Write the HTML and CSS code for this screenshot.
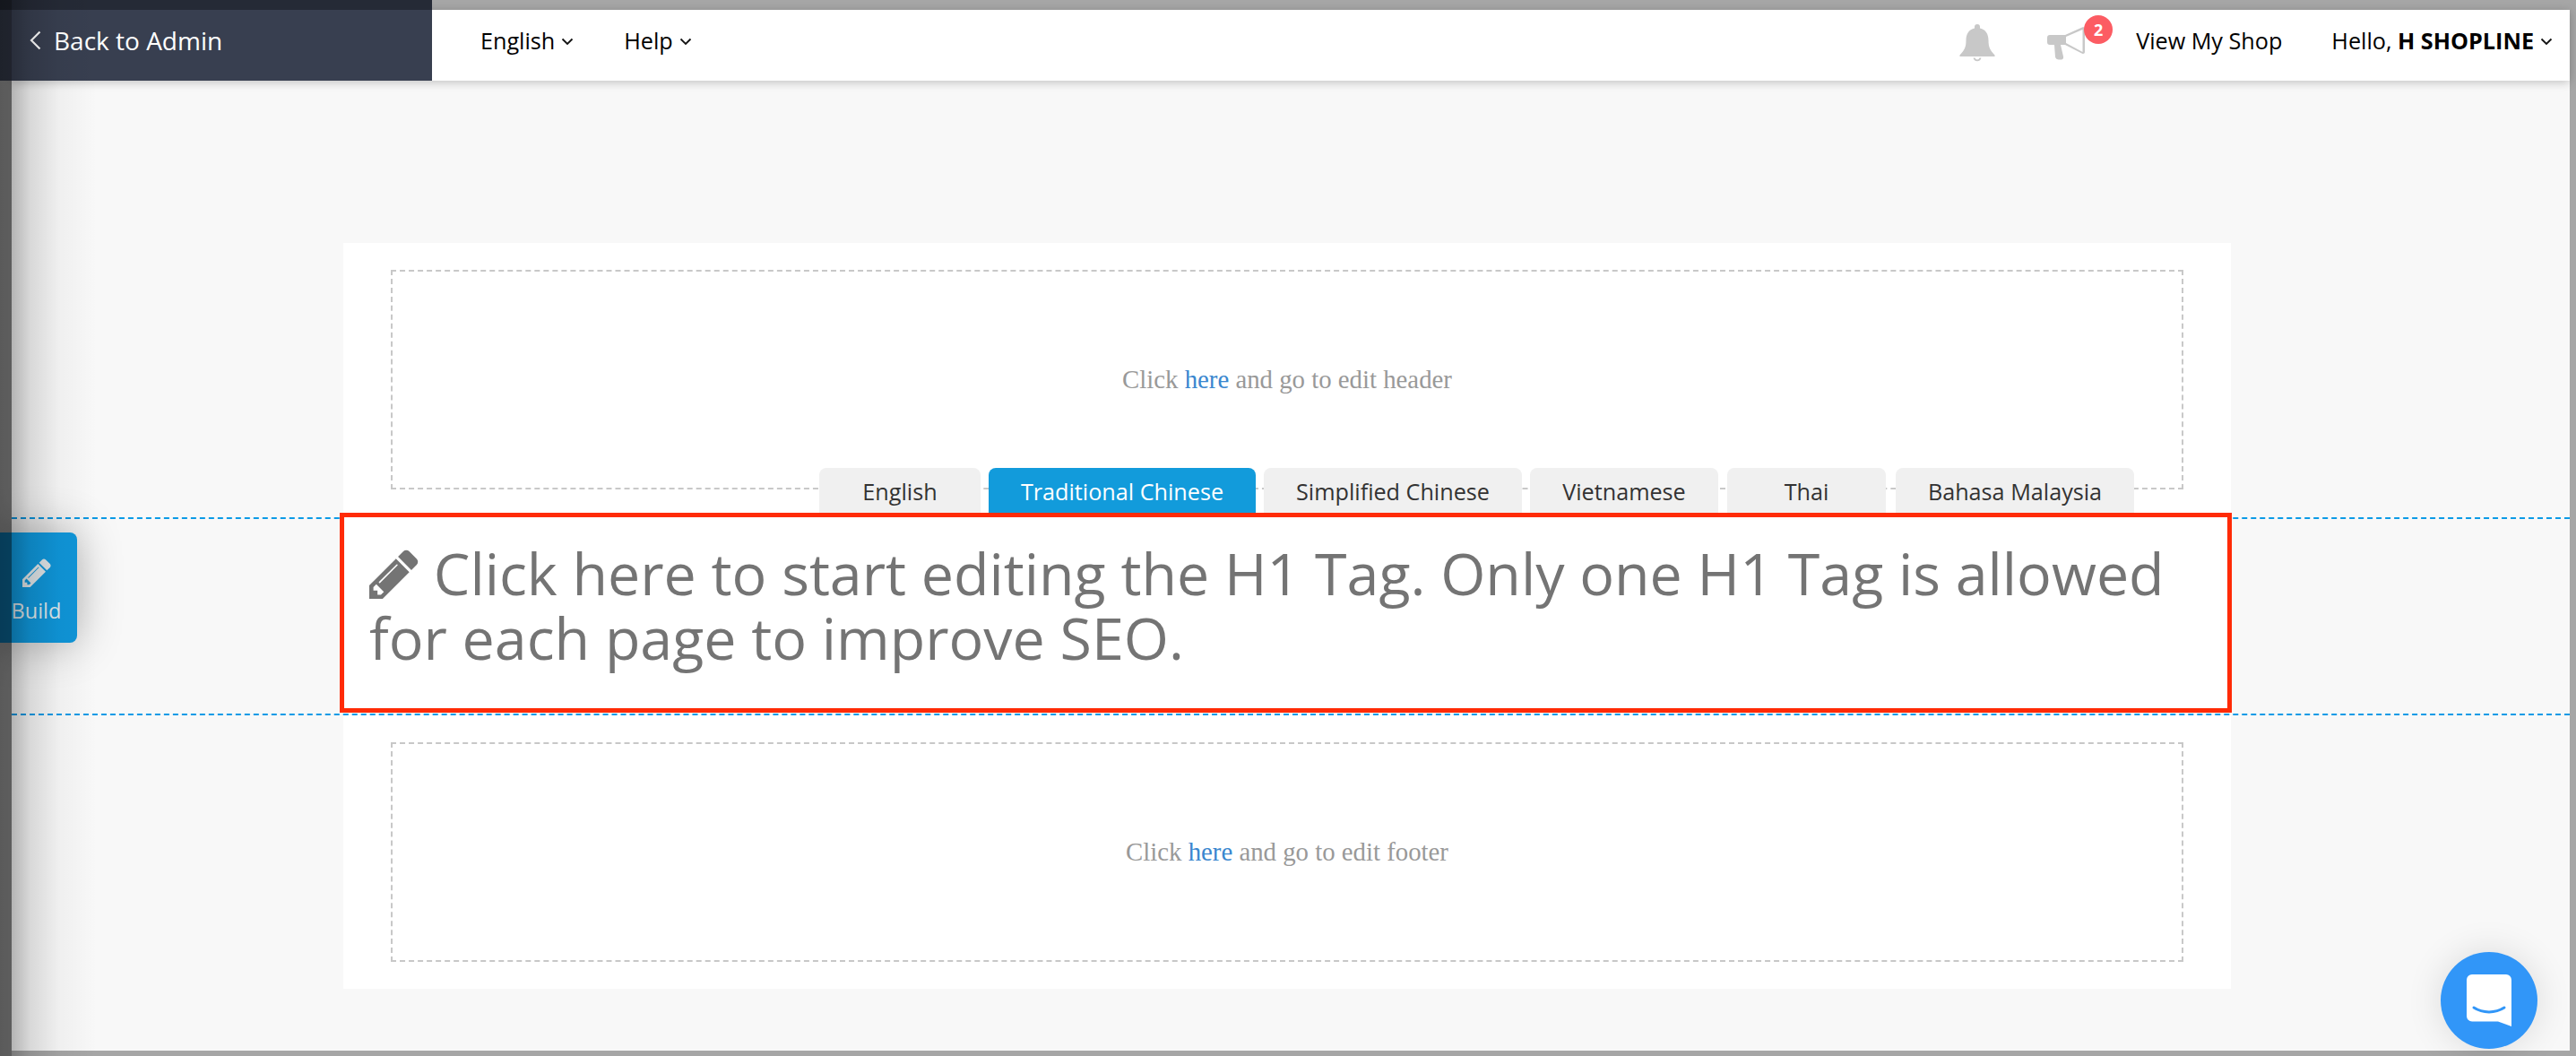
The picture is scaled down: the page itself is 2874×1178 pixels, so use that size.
FILE: index.html
```html
<!DOCTYPE html>
<html lang="en">
<head>
<meta charset="utf-8">
<title>Page Builder</title>
<link rel="stylesheet" href="styles.css">
</head>
<body>
<div class="frame">
  <header class="topbar">
    <a class="back">
      <svg class="back-icon" viewBox="0 0 13 22"><path d="M11.500 1.500 2 11l9.500 9.500"/></svg>
      <span>Back to Admin</span>
    </a>
    <nav class="menu">
      <span class="menu-item">English<svg class="chev" viewBox="0 0 14 9"><path d="M1.500 1.500 7 7l5.500-5.500"/></svg></span>
      <span class="menu-item">Help<svg class="chev" viewBox="0 0 14 9"><path d="M1.500 1.500 7 7l5.500-5.500"/></svg></span>
    </nav>
    <div class="user">
      <svg class="bell" viewBox="0 0 40 44"><path d="M20 1a3 3 0 0 1 3 3v1.500C29.500 7 32.500 12 32.500 19c0 8 2 11 7 16.500V37H.5v-1.500C5.500 30 7.500 27 7.500 19 7.500 12 10.500 7 17 5.500V4a3 3 0 0 1 3-3Z"/><path d="M15.500 38.500a4.600 4.600 0 0 0 9 0h-2a2.600 2.600 0 0 1-5 0Z"/></svg>
      <span class="promo">
        <svg class="horn" viewBox="0 0 44 38"><path d="M3 10h17L39 1.500c1.500-.7 3-.2 3 1.500v26c0 1.700-1.500 2.500-3 1.700L20 21h-5l3 13c.5 2.500-1 3.500-3 3.500h-2c-2 0-3.500-1-4-3L8 21H3a3 3 0 0 1-3-3v-5a3 3 0 0 1 3-3Z"/><path class="horn-cut" d="M21 12 39.500 4v25L21 19Z"/></svg>
        <b class="badge">2</b>
      </span>
      <span class="shop">View My Shop</span>
      <span class="hello">Hello, <b>H SHOPLINE</b><svg class="chev" viewBox="0 0 14 9"><path d="M1.500 1.500 7 7l5.500-5.500"/></svg></span>
    </div>
  </header>

  <main class="canvas">
    <div class="slot-wrap">
      <div class="slot">Click&nbsp;<a>here</a>&nbsp;and go to edit header</div>
    </div>
    <section class="section">
      <div class="tabs">
        <span class="tab tab-en">English</span>
        <span class="tab tab-tc active">Traditional Chinese</span>
        <span class="tab tab-sc">Simplified Chinese</span>
        <span class="tab tab-vi">Vietnamese</span>
        <span class="tab tab-th">Thai</span>
        <span class="tab tab-ms">Bahasa Malaysia</span>
      </div>
      <h1 class="h1-box">
        <svg class="pencil" viewBox="128 128 1536 1536"><path d="M491 1536l91-91-235-235-91 91v107h128v128h107zm523-928q0-22-22-22-10 0-17 7l-542 542q-7 7-7 17 0 22 22 22 10 0 17-7l542-542q7-7 7-17zm-54-192l416 416-832 832h-416v-416zm683 96q0 53-37 90l-166 166-416-416 166-165q36-38 90-38 53 0 91 38l235 234q37 39 37 91z"/></svg>
        Click here to start editing the H1 Tag. Only one H1 Tag is allowed for each page to improve SEO.
      </h1>
    </section>
    <div class="slot-wrap slot-wrap-bottom">
      <div class="slot">Click&nbsp;<a>here</a>&nbsp;and go to edit footer</div>
    </div>
  </main>
</div>

<div class="edge-shadow"></div>
<div class="edge-band"></div>

<button class="build">
  <svg class="build-icon" viewBox="128 128 1536 1536"><path d="M491 1536l91-91-235-235-91 91v107h128v128h107zm523-928q0-22-22-22-10 0-17 7l-542 542q-7 7-7 17 0 22 22 22 10 0 17-7l542-542q7-7 7-17zm-54-192l416 416-832 832h-416v-416zm683 96q0 53-37 90l-166 166-416-416 166-165q36-38 90-38 53 0 91 38l235 234q37 39 37 91z"/></svg>
  <span>Build</span>
</button>

<button class="chat">
  <svg viewBox="0 0 50 58" class="chat-icon"><path d="M6 0h38a6 6 0 0 1 6 6v52l-15-5.500H6a6 6 0 0 1-6-6V6a6 6 0 0 1 6-6Z"/><path class="smile" d="M8 37c10 6.500 24 6.500 34 0"/></svg>
</button>
</body>
</html>
```

FILE: styles.css
```css
* { box-sizing: border-box; }
html, body { margin: 0; height: 1178px; overflow: hidden; }
body {
  position: relative;
  background: #a6a6a6;
  padding: 11px 7px 6px 13px;
  font-family: "Open Sans", sans-serif;
}
.frame {
  height: 100%;
  background: #f8f8f8;
  display: flex;
  flex-direction: column;
}
.topbar {
  height: 79px;
  flex: none;
  background: #fff;
  display: flex;
  align-items: center;
  padding-bottom: 11px;
  box-shadow: 0 2px 10px rgba(0,0,0,.22);
  position: relative;
  z-index: 1;
  font-size: 25.2px;
  color: #000;
}
.back {
  flex: none;
  width: 482px;
  height: 90px;
  margin: 0 0 0 -13px;
  border-top: 11px solid #252a36;
  background: #383f50;
  color: #fff;
  display: flex;
  align-items: center;
  gap: 14px;
  padding: 0 0 11px 33px;
  font-size: 28px;
}
.back-icon { width: 13px; height: 22px; fill: none; stroke: #fff; stroke-width: 2.2; }
.menu { display: flex; gap: 56px; margin-left: 54px; }
.menu-item, .hello { display: flex; align-items: center; white-space: pre; }
.chev { width: 14px; height: 9px; margin: 2px 0 0 7px; fill: none; stroke: #111; stroke-width: 1.8; }
.user { margin-left: auto; display: flex; align-items: center; padding-right: 19px; }
.bell { width: 40px; height: 44px; fill: #c8c8c8; margin: 6px 58px 0 0; }
.promo { position: relative; display: block; width: 44px; height: 38px; margin: 6px 55px 0 0; }
.horn { width: 44px; height: 38px; fill: #c8c8c8; display: block; }
.horn-cut { fill: #fff; }
.badge {
  position: absolute;
  left: 41px;
  top: -12px;
  width: 32px;
  height: 32px;
  border-radius: 50%;
  background: #fc5c63;
  color: #fff;
  font-size: 18px;
  line-height: 32px;
  text-align: center;
}
.shop { margin-right: 55px; }
.hello b { font-weight: 700; }

.canvas {
  flex: 1;
  display: flex;
  flex-direction: column;
  padding-top: 181px;
}
.slot-wrap {
  width: 2106px;
  margin-left: 370px;
  height: 307px;
  padding: 30px 53px 0;
  background: #fff;
}
.slot-wrap-bottom { height: 305px; padding-top: 30px; }
.slot {
  height: 245px;
  border: 2px dashed #c8c8c8;
  display: flex;
  align-items: center;
  justify-content: center;
  font-family: "Liberation Serif", serif;
  font-size: 28.8px;
  color: #999;
}
.slot a { color: #3a87cf; }
.section {
  position: relative;
  height: 221px;
  margin-top: -1px;
  border-top: 2px dashed #0b9ae6;
  border-bottom: 2px dashed #0b9ae6;
}
.tabs {
  position: absolute;
  top: -57px;
  left: 901px;
  display: flex;
  gap: 9px;
}
.tab {
  height: 50px;
  border-radius: 8px 8px 0 0;
  background: #f0f0f0;
  color: #333;
  font-size: 25.2px;
  line-height: 52px;
  text-align: center;
}
.tab-en { width: 180px; }
.tab-tc { width: 298px; }
.tab-sc { width: 288px; }
.tab-vi { width: 210px; }
.tab-th { width: 177px; margin-left: 1px; }
.tab-ms { width: 266px; margin-left: 2px; }
.tab.active { background: #129bdb; color: #fff; }
.h1-box {
  position: relative;
  margin: -7px 0 0 366px;
  width: 2111px;
  height: 223px;
  border: 5px solid #ff2b06;
  background: #fff;
  padding: 26px 20px 0 28px;
  font-size: 64.5px;
  line-height: 72px;
  font-weight: 400;
  color: #747474;
}
.pencil { width: 55px; height: 55px; fill: #747474; vertical-align: -4px; }

.edge-shadow {
  position: absolute;
  left: 0; top: 0; bottom: 0;
  width: 120px;
  background: linear-gradient(90deg, rgba(0,0,0,.3) 0%, rgba(0,0,0,.27) 11%, rgba(0,0,0,.13) 28%, rgba(0,0,0,.035) 55%, rgba(0,0,0,0) 90%);
  z-index: 5;
  pointer-events: none;
}
.edge-band {
  position: absolute;
  left: 0; top: 0; bottom: 0;
  width: 13px;
  background: rgba(0,0,0,.22);
  z-index: 5;
  pointer-events: none;
}
.build {
  position: absolute;
  left: 0;
  top: 594px;
  width: 86px;
  height: 123px;
  border: 0;
  border-radius: 0 8px 8px 0;
  background: #0f95d8;
  color: #dfe6ea;
  font: 23.5px/32px "Open Sans", sans-serif;
  padding: 29px 5px 0 0;
  display: flex;
  flex-direction: column;
  align-items: center;
  justify-content: flex-start;
  gap: 10px;
  box-shadow: 0 0 50px rgba(0,0,0,.3), inset 13px 0 0 rgba(0,0,0,.25);
  z-index: 3;
}
.build-icon { width: 32px; height: 32px; fill: #dde3e6; }
.chat {
  position: absolute;
  left: 2723px;
  top: 1062px;
  width: 108px;
  height: 108px;
  border: 0;
  border-radius: 50%;
  background: #3196f8;
  padding: 0;
  display: flex;
  align-items: center;
  justify-content: center;
  box-shadow: 0 0 40px rgba(0,0,0,.12);
}
.chat-icon { width: 50px; height: 58px; fill: #fff; }
.smile { fill: none; stroke: #3196f8; stroke-width: 3; stroke-linecap: round; }
```
